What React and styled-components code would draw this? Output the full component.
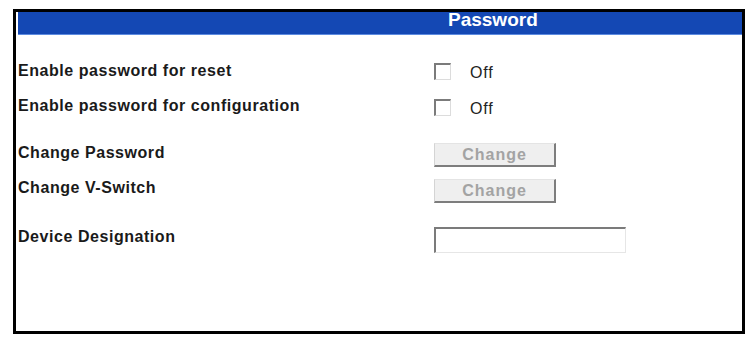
import styled, { createGlobalStyle } from "styled-components";

const GlobalStyle = createGlobalStyle`
  body {
    margin: 0;
    background: #fff;
    font-family: "Liberation Sans", Arial, sans-serif;
  }
`;

//=====================FRAME====================
const Frame = styled.div`
  box-sizing: border-box;
  width: 732px;
  height: 325px;
  margin: 9px 0 0 13px;
  border: 3px solid #000;
  background: #fff;
`;

const TitleBar = styled.div`
  margin-left: 2px;
  height: 22px;
  padding-left: 430px;
  background: #1448b4;
  border-bottom: 1px solid #5d8be0;
  color: #fff;
  font-weight: bold;
  font-size: 19px;
  line-height: 16px;
`;

const Form = styled.div`
  padding: 18px 0 0 2px;
`;

const Row = styled.div`
  display: grid;
  grid-template-columns: 416px auto;
  align-items: center;
  height: 36px;
  margin-top: ${(p) => p.$space || 0}px;
`;

const Label = styled.div`
  font-weight: bold;
  font-size: 16px;
  line-height: 20px;
  letter-spacing: 0.55px;
  color: #1a1a1a;
  margin-bottom: ${(p) => (p.$lift || 0) * 2}px;
`;

const Control = styled.div`
  display: flex;
  align-items: center;
`;

const Checkbox = styled.input`
  appearance: none;
  box-sizing: border-box;
  width: 17px;
  height: 17px;
  margin: 0;
  background: #fff;
  border-style: solid;
  border-width: 2px 1px 1px 2px;
  border-color: #7b7b7b #dcdcdc #dcdcdc #7b7b7b;
`;

const State = styled.span`
  margin: 4px 0 0 19px;
  font-size: 16px;
  letter-spacing: 0.8px;
  color: #222;
`;

const Button = styled.button`
  box-sizing: border-box;
  width: 122px;
  height: 24px;
  padding: 0;
  background: #efefef;
  border-style: solid;
  border-width: 1px 2px 2px 1px;
  border-color: #e4e4e4 #7d7d7d #7d7d7d #d4d4d4;
  font-family: inherit;
  font-weight: bold;
  font-size: 16px;
  letter-spacing: 1px;
  line-height: 20px;
  color: #a3a3a3;
`;

const TextField = styled.input`
  box-sizing: border-box;
  width: 192px;
  height: 26px;
  padding: 0 4px;
  background: #fff;
  border-style: solid;
  border-width: 2px 1px 1px 2px;
  border-color: #7b7b7b #e6e6e6 #e6e6e6 #7b7b7b;
  outline: none;
`;

const App = () => {
  return (
    <>
      <GlobalStyle />
      <Frame>
        <TitleBar>Password</TitleBar>
        <Form>
          <Row>
            <Label>Enable password for reset</Label>
            <Control>
              <Checkbox type="checkbox" />
              <State>Off</State>
            </Control>
          </Row>
          <Row>
            <Label $lift={1}>Enable password for configuration</Label>
            <Control>
              <Checkbox type="checkbox" />
              <State>Off</State>
            </Control>
          </Row>
          <Row $space={12}>
            <Label $lift={2}>Change Password</Label>
            <Control>
              <Button disabled>Change</Button>
            </Control>
          </Row>
          <Row>
            <Label $lift={3}>Change V-Switch</Label>
            <Control>
              <Button disabled>Change</Button>
            </Control>
          </Row>
          <Row $space={13}>
            <Label $lift={3}>Device Designation</Label>
            <Control>
              <TextField type="text" />
            </Control>
          </Row>
        </Form>
      </Frame>
    </>
  );
};

export default App;
